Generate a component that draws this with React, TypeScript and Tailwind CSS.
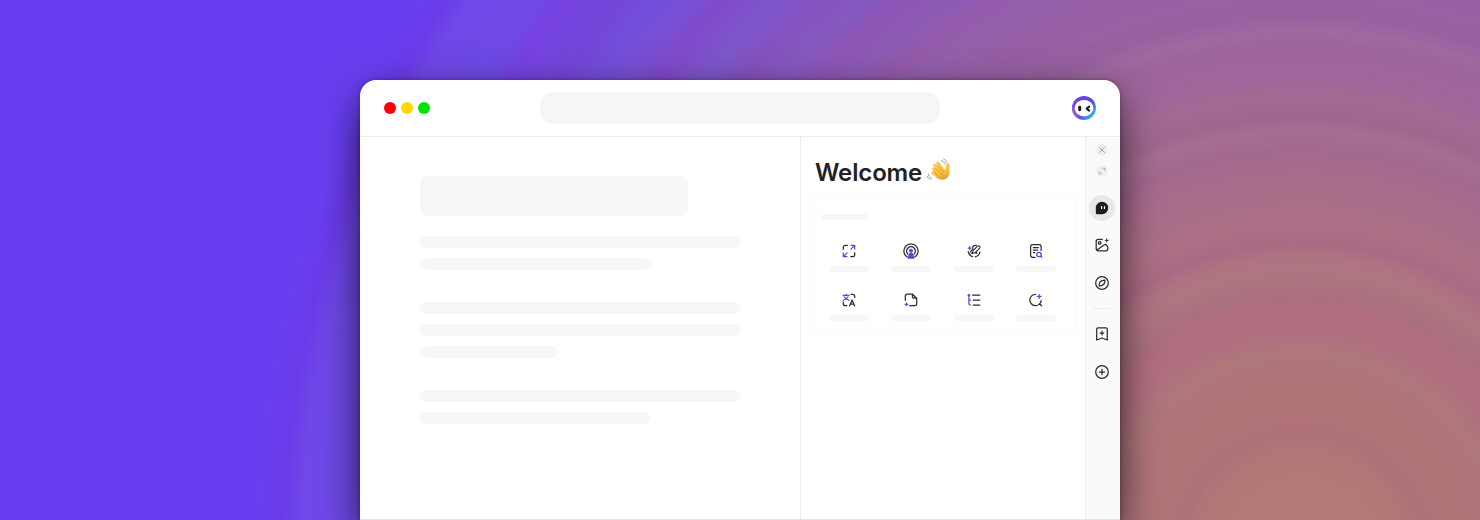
import type { ReactNode } from "react";

const backdrop =
  "bg-[radial-gradient(circle_at_1302px_556px,#b57a74_0px,#b47876_75px,#b27677_105px,#af7179_122px,#b17478_145px,#b0747a_185px,#ae777b_207px,#b07080_222px,#b06e7f_250px,#aa7080_262px,#af7580_285px,#ae7482_298px,#ab6a84_313px,#ae6f86_335px,#a96f88_355px,#a96b8c_385px,#a2698e_405px,#a66e90_425px,#9f678f_438px,#a36a94_460px,#9f669b_480px,#9c659b_512px,#a069a0_524px,#9960a0_540px,#985fa4_580px,#9360ac_615px,#955aac_635px,#8d5bb5_655px,#9055b5_680px,#855ac0_705px,#8652bf_735px,#7c58cb_765px,#8249cb_800px,#784fd2_825px,#714fdb_852px,#7645d9_880px,#7545de_905px,#7742e2_925px,#6e4ae5_945px,#6e48e8_1000px,#6b3be9_1020px,#683ff0_1045px,#673ff0_1100px)]";

function Icon({ children, size = 16 }: { children: ReactNode; size?: number }) {
  return (
    <svg width={size} height={size} viewBox="0 0 16 16" fill="none" stroke="#2c2c30" strokeWidth="1.25" strokeLinecap="round" strokeLinejoin="round" className="shrink-0">
      {children}
    </svg>
  );
}

const accent = "#5b4ad8";

const tools: ReactNode[] = [
  <Icon key="expand">
    <path d="M2.3 6.3V4.2a1.9 1.9 0 0 1 1.9-1.9h2.1M13.7 9.7v2.1a1.9 1.9 0 0 1-1.9 1.9H9.7" />
    <path stroke={accent} d="M10 2.3h3.7V6M13.5 2.5 9.9 6.1M6 13.7H2.3V10M2.5 13.5l3.6-3.6" />
  </Icon>,
  <Icon key="podcast">
    <path d="M4.2 14A7.1 7.1 0 1 1 11.8 14M4.9 11.2a4.4 4.4 0 1 1 6.2 0" />
    <circle cx="8" cy="7.7" r="2" fill={accent} stroke="none" />
    <path d="M8 9.6c2 0 2.900 3 3.300 5.300.1.500-.1.800-.6.800H5.300c-.5 0-.7-.3-.6-.8.4-2.300 1.300-5.300 3.300-5.300Z" fill={accent} stroke="none" />
  </Icon>,
  <Icon key="write">
    <path d="M13.900 9.100c-.5 2.500-2.300 4.400-4.700 4.800M6.500 13.700A6.200 6.200 0 0 1 2.200 8.700" />
    <path strokeWidth="1.100" d="m6.500 10.200.4-2.400 4.700-4.700a1.500 1.500 0 0 1 2.100 2.100L9 9.900Z" />
    <path strokeWidth="1.100" d="M10.400 2.400C8.200 2.300 6.900 3.100 6.700 4.200c-.2 1 .5 1.300.1 2-.5.900-2.100 1.200-2.100 2.700 0 .9.700 1.500 1.600 1.500M9.400 9.700c1-.6 1.800-.1 1.300.8" />
    <path stroke={accent} d="M3.600 3.600v3M2.100 5.100h3" />
  </Icon>,
  <Icon key="read">
    <path d="M7 14.300H4.600a2 2 0 0 1-2-2V3.600a2 2 0 0 1 2-2h6.500a2 2 0 0 1 2 2v4M5.300 4.700h5.100M5.300 7.200h4.200M5.300 9.700h1.500" />
    <circle cx="11" cy="11.500" r="2.200" stroke={accent} />
    <path stroke={accent} d="m12.800 13.300 1 1" />
  </Icon>,
  <Icon key="translate">
    <path d="M10.200 2.400h1.500a2 2 0 0 1 2 2v1M2.300 10v1.700a2 2 0 0 0 2 2h1.500M8.600 13.900l2.500-6 2.600 6M9.400 12h3.500" />
    <path stroke={accent} d="M2 3.300h6.200M5.100 2v1.300M3.300 4.800c.8 1.800 2.200 2.800 4.700 3.500M7 4.800C6.200 6.600 4.800 7.600 2.200 8.300" />
  </Icon>,
  <Icon key="page">
    <path d="M2.300 8.300V4.100a1.900 1.900 0 0 1 1.900-1.900h5.300l4.200 4.100v5.500a1.900 1.900 0 0 1-1.900 1.900H6.700M9.400 2.300v2.300a1.600 1.600 0 0 0 1.600 1.600h2.600" />
    <path stroke={accent} d="M3.500 10.900v2.800M2.100 12.300h2.800" />
  </Icon>,
  <Icon key="outline">
    <path d="M6.700 3.200h7.100M7.200 8.100h6.600M7.200 13h6.600" />
    <path stroke={accent} d="M2.900 3.400v8.200c0 .9.400 1.400 1.400 1.400h.2M2.900 8.100h1.600" />
    <circle cx="2.900" cy="3.200" r="1.300" fill={accent} stroke="none" />
  </Icon>,
  <Icon key="search">
    <path d="M7.600 2.300a5.700 5.700 0 1 0 5.600 6.300M11.500 11.700l2.100 2.100" />
    <path stroke={accent} d="M11.200 2.500v3.900M9.250 4.450h3.900" />
  </Icon>,
];

function Bar({ className }: { className: string }) {
  return <div className={`bg-[#f7f7f7] ${className}`} />;
}

function WavingHand() {
  return (
    <svg width="32" height="32" viewBox="0 0 96 96" fill="none" strokeLinecap="round" strokeLinejoin="round" role="img" aria-label="👋" className="mt-px shrink-0">
      <defs>
        <linearGradient id="skin" x1="35" y1="15" x2="60" y2="72" gradientUnits="userSpaceOnUse">
          <stop offset="0" stopColor="#fbcf55" />
          <stop offset=".65" stopColor="#f8c341" />
          <stop offset="1" stopColor="#e0962a" />
        </linearGradient>
      </defs>
      <g stroke="url(#skin)" strokeWidth="9">
        <path d="M41 21 61 46M31 27 56 54M28 39 49 59M27 51 45 65" />
      </g>
      <path d="M44 31 59 43c4 1 6-3 6-8 0-8 3-13 7-13s6 4 5 10c-1 7 1 13-1 22-3 13-16 20-29 16-10-4-14-12-19-19Z" fill="url(#skin)" />
      <path d="M39 27 54 44M33 36 49 52M30 47 43 59M60 45c-5 3-7 7-6 11" stroke="#d08c26" strokeWidth="2.200" />
      <path d="M52 14c6 1 9 5 11 10M59 9c5 2 8 5 9 10M13 54c1 6 4 10 10 13M9 61c2 4 4 7 9 9" stroke="#777" strokeWidth="2.200" />
    </svg>
  );
}

function Avatar() {
  return (
    <svg width="24" height="24" viewBox="0 0 24 24">
      <defs>
        <linearGradient id="ring" x1="3" y1="5" x2="21" y2="20" gradientUnits="userSpaceOnUse">
          <stop offset="0" stopColor="#6845e5" />
          <stop offset=".55" stopColor="#5546df" />
          <stop offset="1" stopColor="#35b8e7" />
        </linearGradient>
        <radialGradient id="glow" cx="2" cy="17" r="9" gradientUnits="userSpaceOnUse">
          <stop offset="0" stopColor="#a95be0" />
          <stop offset="1" stopColor="#a95be0" stopOpacity="0" />
        </radialGradient>
      </defs>
      <circle cx="12" cy="12" r="12" fill="url(#ring)" />
      <circle cx="12" cy="12" r="12" fill="url(#glow)" />
      <ellipse cx="12" cy="12.200" rx="9.300" ry="8.300" fill="#fff" />
      <rect x="6.200" y="9.800" width="3" height="5.400" rx="1.400" fill="#18181c" />
      <path d="m17.200 10.600-2.500 2 2.500 2" fill="none" stroke="#18181c" strokeWidth="2" strokeLinecap="round" strokeLinejoin="round" />
    </svg>
  );
}

function Rail() {
  return (
    <aside className="flex w-[35px] shrink-0 flex-col items-center border-l border-[#ececee] bg-[#fafafa] pt-[7px] pr-0.5">
      <span className="flex size-3 items-center justify-center rounded-full bg-[#efefef]">
        <svg width="8" height="8" viewBox="0 0 8 8" fill="none" stroke="#929292" strokeWidth=".8" strokeLinecap="round"><path d="m1.500 1.500 5 5m0-5-5 5" /></svg>
      </span>
      <span className="mt-[9px] flex size-3 items-center justify-center rounded-full bg-[#efefef]">
        <svg width="8" height="8" viewBox="0 0 8 8" fill="none" stroke="#999" strokeWidth=".8"><path d="M4.300 1.200h2.500v2.500M1.200 4.300v2.500h2.500" /></svg>
      </span>
      <span className="mt-[18px] flex size-[26px] items-center justify-center rounded-full bg-[#e6e8ea]">
        <svg width="14" height="14" viewBox="0 0 14 14">
          <path d="M7 .8a6.200 6.200 0 1 1 0 12.400H2.300A1.500 1.500 0 0 1 .8 11.700V7A6.200 6.200 0 0 1 7 .8Z" fill="#1b1d21" />
          <path d="M6.600 5.500v2M9.500 5.500v2" stroke="#fff" strokeWidth="1.200" strokeLinecap="round" />
        </svg>
      </span>
      <span className="mt-4">
        <Icon>
          <path d="M8.300 2.300H4.200a2 2 0 0 0-2 2v7.500a2 2 0 0 0 2 2h7.600a2 2 0 0 0 2-2v-1.500c0-.6-.2-1-.6-1.300l-1.400-1.200c-.5-.4-1-.4-1.500 0L3 13.100" />
          <circle cx="5.700" cy="5.900" r="1.300" />
          <path d="m12.700 1 .7 1.700 1.700.7-1.700.7-.7 1.700-.7-1.700-1.700-.7 1.700-.7Z" fill="#2c2c30" stroke="none" />
        </Icon>
      </span>
      <span className="mt-[22px]">
        <Icon><circle cx="8" cy="8" r="6.300" /><path d="M10.900 5.100c.3 2-.4 3.300-1.200 4.100-1 1-2.400 1.900-4.600 1.700-.3-2 .4-3.300 1.200-4.100 1-1 2.400-1.900 4.600-1.700Z" /></Icon>
      </span>
      <div className="mt-[17px] h-px w-[18px] bg-[#ededed]" />
      <span className="mt-[17px]">
        <Icon><path d="M2.700 3.200a1.300 1.300 0 0 1 1.300-1.300h8a1.300 1.300 0 0 1 1.300 1.300V14L8 12 2.700 14ZM8 5.200v3.600M6.200 7h3.600" /></Icon>
      </span>
      <span className="mt-[22px]">
        <Icon><circle cx="8" cy="8" r="6.300" /><path d="M8 5.300v5.400M5.300 8h5.400" /></Icon>
      </span>
    </aside>
  );
}

export default function App() {
  return (
    <div className={`h-[520px] w-[1480px] overflow-hidden pt-20 ${backdrop}`}>
      <div className="mx-auto flex h-[440px] w-[760px] flex-col overflow-hidden rounded-t-2xl border-b border-[#e4e4e8] bg-white shadow-[0_12px_40px_rgba(0,0,0,0.5),0_40px_30px_rgba(0,0,0,0.25),0_0_4px_rgba(0,0,0,0.3)]">
        <header className="flex h-[57px] shrink-0 items-center justify-between border-b border-[#ececec] px-6">
          <div className="flex w-[156px] gap-[5px]">
            <span className="size-3 rounded-full bg-[#ff0008]" />
            <span className="size-3 rounded-full bg-[#ffd600]" />
            <span className="size-3 rounded-full bg-[#00e500]" />
          </div>
          <div className="h-8 w-[400px] rounded-[14px] bg-[#f6f6f6]" />
          <div className="flex w-[156px] justify-end"><Avatar /></div>
        </header>
        <div className="flex flex-1">
          <main className="w-[440px] shrink-0 px-[60px] pt-[39px]">
            <Bar className="h-10 w-[268px] rounded-lg" />
            <Bar className="mt-5 h-3 w-80 rounded-md" />
            <Bar className="mt-2.5 h-3 w-[232px] rounded-md" />
            <Bar className="mt-8 h-3 w-80 rounded-md" />
            <Bar className="mt-2.5 h-3 w-80 rounded-md" />
            <Bar className="mt-2.5 h-3 w-[138px] rounded-md" />
            <Bar className="mt-8 h-3 w-80 rounded-md" />
            <Bar className="mt-2.5 h-3 w-[230px] rounded-md" />
          </main>
          <section className="min-w-0 flex-1 border-l border-[#ececee] pt-[18px]">
            <div className="ml-3.5 flex h-[34px] items-start">
              <h1 className="w-[109px] pt-0.5 font-['Inter',sans-serif] text-2xl leading-8 font-semibold tracking-[-0.15px] text-[#222]">Welcome</h1>
              <WavingHand />
            </div>
            <div className="mt-1 ml-[9px] h-[141px] w-[267px] rounded-md border border-[#fbfbfb] pt-5">
              <Bar className="ml-2.5 h-1.5 w-[47px] rounded-sm" />
              <div className="mt-[23px] grid grid-cols-[repeat(4,62.5px)] gap-y-5 pl-[6.5px]">
                {tools.map((tool, i) => (
                  <div key={i} className="flex h-[29px] flex-col items-center justify-between">
                    {tool}
                    <Bar className="h-1.5 w-10 rounded-sm" />
                  </div>
                ))}
              </div>
            </div>
          </section>
          <Rail />
        </div>
      </div>
    </div>
  );
}
